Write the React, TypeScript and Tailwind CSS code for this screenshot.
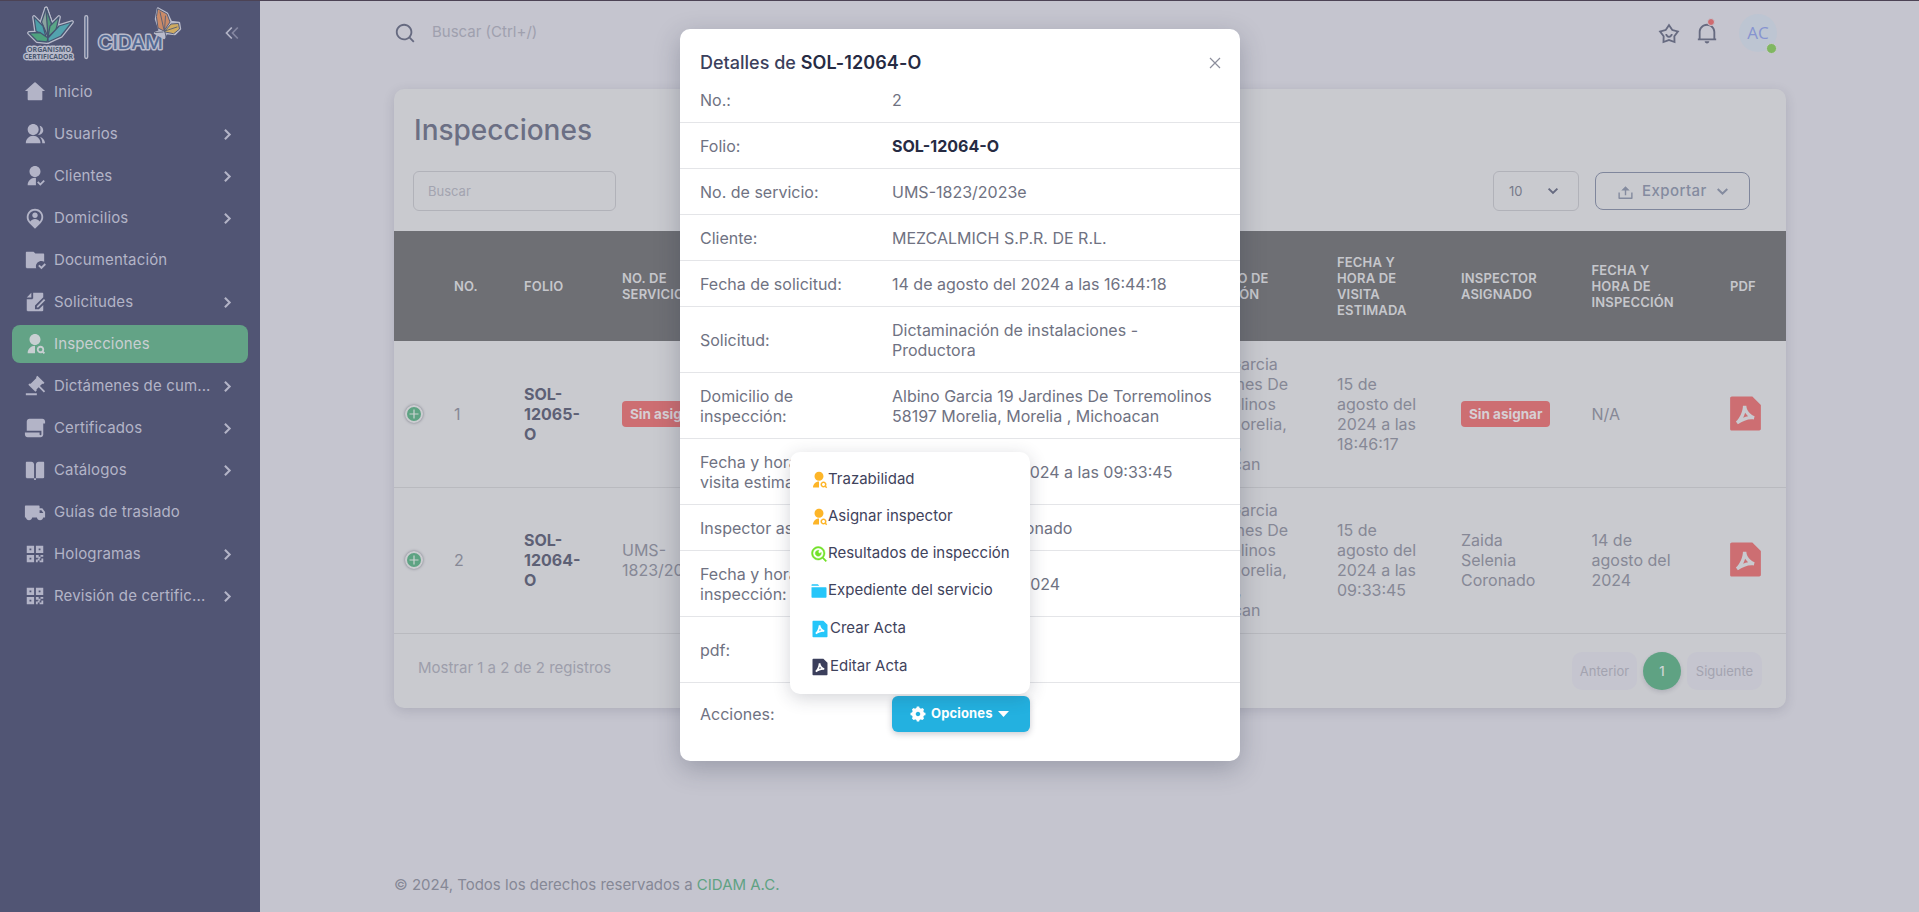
import React from "react";
import {
  RiGroupFill, RiUserFollowFill, RiMapPinUserFill, RiFolderCheckFill, RiFileEditFill,
  RiUserSearchFill, RiAuctionFill, RiFilePaper2Fill, RiBookOpenFill, RiTruckFill, RiQrCodeFill,
  RiFilePdf2Fill, RiSearchLine, RiStarSmileLine, RiNotification2Line, RiUpload2Line, RiSearchEyeLine,
  RiFolder3Fill, RiSettings5Fill,
} from "react-icons/ri";

type Icon = React.ComponentType<{ size?: number; className?: string }>;

function HomeIcon({ size = 22, className }: { size?: number; className?: string }) {
  return (
    <svg width={size} height={size} viewBox="0 0 24 24" fill="currentColor" className={className}>
      <path d="M20 20a1 1 0 0 1-1 1H5a1 1 0 0 1-1-1v-9H1L11.327 1.612a1 1 0 0 1 1.346 0L23 11h-3z" />
    </svg>
  );
}

const menu: { label: string; icon: Icon; sub?: boolean; active?: boolean }[] = [
  { label: "Inicio", icon: HomeIcon },
  { label: "Usuarios", icon: RiGroupFill, sub: true },
  { label: "Clientes", icon: RiUserFollowFill, sub: true },
  { label: "Domicilios", icon: RiMapPinUserFill, sub: true },
  { label: "Documentación", icon: RiFolderCheckFill },
  { label: "Solicitudes", icon: RiFileEditFill, sub: true },
  { label: "Inspecciones", icon: RiUserSearchFill, active: true },
  { label: "Dictámenes de cum...", icon: RiAuctionFill, sub: true },
  { label: "Certificados", icon: RiFilePaper2Fill, sub: true },
  { label: "Catálogos", icon: RiBookOpenFill, sub: true },
  { label: "Guías de traslado", icon: RiTruckFill },
  { label: "Hologramas", icon: RiQrCodeFill, sub: true },
  { label: "Revisión de certific...", icon: RiQrCodeFill, sub: true },
];

function Chevron({ className }: { className?: string }) {
  return (
    <svg viewBox="0 0 12 12" fill="none" stroke="currentColor" strokeWidth="1.9" className={className}>
      <path d="M1.6 3.6 L6 8 L10.4 3.6" />
    </svg>
  );
}

const leaves: [string, string][] = [
  ["M26 4.500 L21.500 18 L28 33 L31.500 20Z", "#8aa39f"],
  ["M26 4.500 L28 33 L31.500 20Z", "#4e9a7c"],
  ["M14 13 L16 27 L26 33 L23 22Z", "#4b9fa8"],
  ["M39 13 L30 22 L28 33 L36 26Z", "#5aa687"],
  ["M9 29 L20 28.500 L28 34 L27 38 L17 37Z", "#4ea27e"],
  ["M52 18 L39 22 L28 34 L28 38 L41 32Z", "#53a3ae"],
];

function Logo() {
  return (
    <svg width="164" height="58" viewBox="0 0 164 58" className="shrink-0">
      <g strokeLinejoin="round">
        {leaves.map(([d]) => <path key={d} d={d} fill="#b9bbcb" stroke="#b9bbcb" strokeWidth="3.800" />)}
        {leaves.map(([d, c]) => <path key={d} d={d} fill={c} stroke="#465672" strokeWidth="1.300" />)}
      </g>
      <g fontFamily="Open Sans, sans-serif" fontWeight="700" fontSize="7" textAnchor="middle" fill="#4a5870" stroke="#b9bbcb" strokeWidth="2.800" paintOrder="stroke" strokeLinejoin="round">
        <text x="29" y="48.300" textLength="44" lengthAdjust="spacingAndGlyphs">ORGANISMO</text>
        <text x="28.500" y="55.200" textLength="49" lengthAdjust="spacingAndGlyphs">CERTIFICADOR</text>
      </g>
      <rect x="64.800" y="11.700" width="2.900" height="42.800" rx="1.450" fill="#5d6b8c" stroke="#b9bbcb" strokeWidth="1.300" />
      <text x="78" y="45.300" fontFamily="Inter, sans-serif" fontWeight="500" fontSize="18" textLength="65" lengthAdjust="spacingAndGlyphs" fill="#546a94" stroke="#b9bbcb" strokeWidth="2.800" paintOrder="stroke" strokeLinejoin="round">CIDAM</text>
      <g strokeLinejoin="round" strokeLinecap="round">
        <path d="M138 4.500 L147 9.500 L151 18 L159 19 L160 25 L155 30 L146 29 L144 34 L135 29 L140 27 L136 15Z" fill="#b9bbcb" stroke="#b9bbcb" strokeWidth="2.400" />
        <path d="M138 5 L147 10 L150 18 L144 27 L138 24 L136.500 13Z" fill="#c98a68" stroke="#565c74" strokeWidth="1" />
        <path d="M144.500 27.500 L151 20 L158.500 19.500 L159.500 25 L154 29.500Z" fill="#cfab60" stroke="#565c74" strokeWidth="1" />
        <path d="M140 8 L144 26 M145.500 12 L144.500 26 M145 27 L157 23 M145 28 L146 33 M143 28 L135 28.500" stroke="#565c74" strokeWidth=".900" fill="none" />
      </g>
    </svg>
  );
}

function Sidebar() {
  return (
    <aside className="flex w-[260px] shrink-0 flex-col bg-[#515574]">
      <div className="flex h-[73px] items-start justify-between pl-5 pr-[20px]">
        <div className="pt-[4px]"><Logo /></div>
        <svg width="16" height="16" viewBox="0 0 16 16" fill="none" strokeWidth="1.700" className="mt-[25px]">
          <path d="M7.800 2.500 L2.500 8 L7.800 13.500" stroke="#b3b4c7" />
          <path d="M13.800 2.500 L8.500 8 L13.800 13.500" stroke="#8486a0" />
        </svg>
      </div>
      <nav className="flex flex-col gap-1 px-3 tracking-[0.14px]">
        {menu.map(({ label, icon: I, sub, active }) => (
          <a key={label} className={active
            ? "flex h-[38px] items-center gap-2 rounded-lg bg-[#63a386] pl-3 pr-[14px] text-[#c9cfd2]"
            : "flex h-[38px] items-center gap-2 rounded-lg pl-3 pr-[14px] text-[#b3b4c7]"}>
            <I size={22} className="shrink-0" />
            <span className="flex-1 whitespace-nowrap">{label}</span>
            {sub && <Chevron className="mt-px size-[13px] -rotate-90" />}
          </a>
        ))}
      </nav>
    </aside>
  );
}

function Navbar() {
  return (
    <header className="flex h-16 items-center">
      <RiSearchLine size={22} className="text-[#666a80]" />
      <span className="ml-4 flex-1 pb-[2px] text-[#9fa0ae]">Buscar (Ctrl+/)</span>
      <RiStarSmileLine size={22} className="mt-px text-[#666a80]" />
      <div className="relative ml-4">
        <RiNotification2Line size={22} className="text-[#666a80]" />
        <span className="absolute right-[3px] top-[-4px] size-2 rounded-full border border-[#c5c5cf] bg-[#cf6b70]" />
      </div>
      <div className="relative ml-[21px] mr-[9px] flex size-[38px] items-center justify-center rounded-full bg-[#bdc5d2] font-['Open_Sans',sans-serif] text-[17px] text-[#8794d0]">
        AC
        <span className="absolute bottom-[-2px] right-0 size-[11px] rounded-full border-[1.500px] border-[#c9cacf] bg-[#80b761]" />
      </div>
    </header>
  );
}

const cols = "grid grid-cols-[60px_70px_98px_555px_160px_124px_130.5px_138.5px_56px] items-center";

function Lines({ items }: { items: string[] }) {
  return <div className="whitespace-nowrap">{items.map((t) => <div key={t}>{t}</div>)}</div>;
}

function Unassigned() {
  return <span className="inline-flex h-[26px] items-center rounded bg-[#cd6e72] px-[8px] text-[13.500px] font-bold text-[#d6cfd4]">Sin asignar</span>;
}

const address = ["Albino Garcia", "19 Jardines De", "Torremolinos", "58197 Morelia,", "Morelia ,", "Michoacan"];

function Row({ no, folio, service, visit, inspector, date }: {
  no: string; folio: string[]; service: React.ReactNode; visit: string[]; inspector: React.ReactNode; date: string[];
}) {
  return (
    <div className={`${cols} h-[146px] shrink-0 border-b border-[#b9babf] pb-[2px] text-base leading-5 text-[#868896]`}>
      <div className="pl-[11px]">
        <span className="flex size-[18px] items-center justify-center rounded-full border-2 border-[#cccdd1] bg-[#5ea383] shadow-[0_0_3px_#777986]">
          <svg width="10" height="10" viewBox="0 0 10 10" stroke="#cbd3d2" strokeWidth="1.200"><path d="M5 .5V9.500M.5 5H9.500" /></svg>
        </span>
      </div>
      <div>{no}</div>
      <div className="font-bold text-[#5d6075]"><Lines items={folio} /></div>
      <div>{service}</div>
      <Lines items={address} />
      <Lines items={visit} />
      <div>{inspector}</div>
      <Lines items={date} />
      <div className="ml-[-5px]"><RiFilePdf2Fill size={41} className="text-[#cd6e72]" /></div>
    </div>
  );
}

function InspectionsCard() {
  return (
    <section className="mt-6 flex h-[619px] flex-col overflow-hidden rounded-[10px] bg-[#c9cacf] shadow-[0_3px_12px_rgba(38,43,67,0.15)]">
      <h4 className="ml-5 mt-[22px] text-[28px] leading-[38px] font-medium text-[#6b6f84]">Inspecciones</h4>
      <div className="mt-[22px] flex h-10 items-center pl-[19px] pr-9 text-[13px]">
        <div className="flex h-10 w-[203px] items-center rounded-md border border-[#b1b2b9] pl-[14px] text-[#a3a4b0]">Buscar</div>
        <div className="ml-auto flex h-10 w-[86px] items-center justify-between rounded-md border border-[#b1b2b9] pl-[15px] pr-[19px] text-[#777a8a]">
          10 <Chevron className="size-[12px] text-[#666a80]" />
        </div>
        <div className="ml-4 flex h-[38px] w-[155px] items-center rounded-lg border border-[#7f869c] pl-[21px] text-[15px] font-medium text-[#848b9f]">
          <RiUpload2Line size={17} className="mt-[2px]" />
          <span className="ml-2 tracking-[0.43px]">Exportar</span>
          <Chevron className="ml-[9px] size-[13px]" />
        </div>
      </div>
      <div className={`${cols} mb-px mt-5 h-[110px] shrink-0 bg-[#6e6f74] text-[13px] leading-4 font-semibold tracking-[0.16px] text-[#c6c7cc]`}>
        <div />
        <div>NO.</div>
        <div>FOLIO</div>
        <Lines items={["NO. DE", "SERVICIO"]} />
        <Lines items={["DOMICILIO DE", "INSPECCIÓN"]} />
        <Lines items={["FECHA Y", "HORA DE", "VISITA", "ESTIMADA"]} />
        <Lines items={["INSPECTOR", "ASIGNADO"]} />
        <Lines items={["FECHA Y", "HORA DE", "INSPECCIÓN"]} />
        <div>PDF</div>
      </div>
      <Row no="1" folio={["SOL-", "12065-", "O"]} service={<Unassigned />}
        visit={["15 de", "agosto del", "2024 a las", "18:46:17"]} inspector={<Unassigned />} date={["N/A"]} />
      <Row no="2" folio={["SOL-", "12064-", "O"]} service={<Lines items={["UMS-", "1823/2023e"]} />}
        visit={["15 de", "agosto del", "2024 a las", "09:33:45"]}
        inspector={<Lines items={["Zaida", "Selenia", "Coronado"]} />} date={["14 de", "agosto del", "2024"]} />
      <div className="flex flex-1 items-center pl-6 pr-6">
        <span className="mb-[6px] flex-1 text-[#9d9eab]">Mostrar 1 a 2 de 2 registros</span>
        <div className="flex items-center gap-[6px] text-[13px] text-[#a3a3b0]">
          <span className="flex h-[38px] w-[65px] items-center justify-center rounded-[10px] bg-[#c5c5cf]">Anterior</span>
          <span className="flex size-[38px] items-center justify-center rounded-full bg-[#5fa283] font-medium text-[#cfd5d6] shadow-[0_2px_4px_rgba(38,43,67,0.15)]">1</span>
          <span className="flex h-[38px] w-[75px] items-center justify-center rounded-[10px] bg-[#c5c5cf]">Siguiente</span>
        </div>
      </div>
    </section>
  );
}

const details: { label: string[]; value: React.ReactNode; tall?: boolean }[] = [
  { label: ["No.:"], value: "2" },
  { label: ["Folio:"], value: <b className="font-bold text-[#262b43]">SOL-12064-O</b> },
  { label: ["No. de servicio:"], value: "UMS-1823/2023e" },
  { label: ["Cliente:"], value: "MEZCALMICH S.P.R. DE R.L." },
  { label: ["Fecha de solicitud:"], value: "14 de agosto del 2024 a las 16:44:18" },
  { label: ["Solicitud:"], value: <Lines items={["Dictaminación de instalaciones -", "Productora"]} />, tall: true },
  { label: ["Domicilio de", "inspección:"], value: <Lines items={["Albino Garcia 19 Jardines De Torremolinos", "58197 Morelia, Morelia , Michoacan"]} />, tall: true },
  { label: ["Fecha y hora de", "visita estimada:"], value: "15 de agosto del 2024 a las 09:33:45", tall: true },
  { label: ["Inspector asignado:"], value: "Zaida Selenia Coronado" },
  { label: ["Fecha y hora de", "inspección:"], value: "14 de agosto del 2024", tall: true },
  { label: ["pdf:"], value: null, tall: true },
];

const actions: { label: string; icon: Icon; size: number; color: string; h: string }[] = [
  { label: "Trazabilidad", icon: RiUserSearchFill, size: 18, color: "text-[#fdb528]", h: "h-[37px]" },
  { label: "Asignar inspector", icon: RiUserSearchFill, size: 18, color: "text-[#fdb528]", h: "h-[37px]" },
  { label: "Resultados de inspección", icon: RiSearchEyeLine, size: 18, color: "text-[#72e128] [stroke-width:0.6px] stroke-current", h: "h-[37px]" },
  { label: "Expediente del servicio", icon: RiFolder3Fill, size: 18, color: "text-[#26c6f9]", h: "h-[37px]" },
  { label: "Crear Acta", icon: RiFilePdf2Fill, size: 20, color: "text-[#26c6f9]", h: "mt-px h-[38px]" },
  { label: "Editar Acta", icon: RiFilePdf2Fill, size: 20, color: "text-[#3b3f5c]", h: "h-[38px]" },
];

function Modal() {
  return (
    <div role="dialog" className="absolute left-[680px] top-[29px] h-[732px] w-[560px] rounded-[10px] bg-white shadow-[0_8px_26px_rgba(38,43,67,0.27)]">
      <div className="flex h-12 items-end justify-between pl-5 pr-[19px]">
        <h5 className="text-[18px] leading-7 text-[#3b3f5c]">
          <span className="font-medium">Detalles de </span><b className="font-semibold tracking-[0.1px] text-[#262b43]">SOL-12064-O</b>
        </h5>
        <svg width="12" height="12" viewBox="0 0 12 12" stroke="#8c8e9c" strokeWidth="1.200" className="mb-2"><path d="M1 1 L11 11 M11 1 L1 11" /></svg>
      </div>
      {details.map((d) => (
        <div key={d.label.join(" ")} className={d.tall
          ? "grid h-[66px] grid-cols-[192px_1fr] items-center border-b border-[#e4e5e8] pl-5 pt-px text-base leading-5 text-[#6f7282]"
          : "grid h-[46px] grid-cols-[192px_1fr] items-center border-b border-[#e4e5e8] pl-5 pt-px text-base leading-5 text-[#6f7282]"}>
          <Lines items={d.label} />
          <div>{d.value}</div>
        </div>
      ))}
      <div className="grid h-[63px] grid-cols-[192px_1fr] items-center pl-5 text-base text-[#6f7282]">
        <span className="-mt-px">Acciones:</span>
        <div className="relative -mt-0.5 w-[138px]">
          <button className="flex h-9 w-[138px] items-center rounded-md bg-[#23b1e0] pl-[17px] text-[13px] font-bold text-white shadow-[0_2px_6px_rgba(38,43,67,0.25)]">
            <RiSettings5Fill size={18} />
            <span className="ml-1 tracking-[0.15px]">Opciones</span>
            <svg width="11" height="6" viewBox="0 0 11 6" fill="currentColor" className="ml-[5px]"><path d="M0 0H11L5.500 6Z" /></svg>
          </button>
          <div className="absolute bottom-[38px] right-0 flex h-[242px] w-[240px] flex-col rounded-[10px] bg-white pl-5 pt-[8.500px] shadow-[0_4px_18px_rgba(38,43,67,0.2)]">
            {actions.map(({ label, icon: I, size, color, h }) => (
              <a key={label} className={`flex items-center whitespace-nowrap text-[15px] leading-[22px] text-[#3f435c] ${h}`}>
                <I size={size} className={`mt-[2px] shrink-0 ${color}`} />
                {label}
              </a>
            ))}
          </div>
        </div>
      </div>
    </div>
  );
}

export default function App() {
  return (
    <div className="relative flex h-[912px] w-[1919px] overflow-hidden bg-[#c5c5cf] font-[Inter,sans-serif] text-[15px] leading-[22px]">
      <Sidebar />
      <main className="flex flex-1 flex-col pl-[134px] pr-[133px] pt-px">
        <Navbar />
        <InspectionsCard />
        <footer className="mt-auto pb-[16px] text-[#868896]">
          © 2024, Todos los derechos reservados a <span className="text-[#5fa283]">CIDAM A.C.</span>
        </footer>
      </main>
      <div className="absolute inset-x-0 top-0 h-px bg-[#4c4355]" />
      <Modal />
    </div>
  );
}
